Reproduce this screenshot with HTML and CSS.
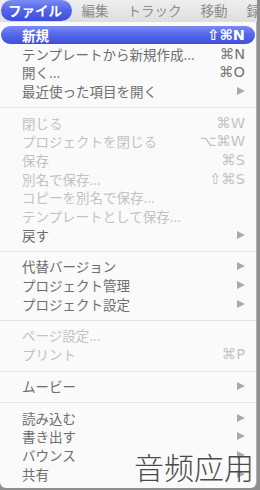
FILE: index.html
```html
<!DOCTYPE html>
<html lang="ja">
<head>
<meta charset="utf-8">
<link rel="stylesheet" href="styles.css">
</head>
<body>
<div class="screen">
  <div class="menubar">
    <span class="title active">ファイル</span>
    <span class="title">編集</span>
    <span class="title">トラック</span>
    <span class="title">移動</span>
    <span class="title cut">録</span>
  </div>
  <div class="menu">
    <div class="item hl"><span class="label">新規</span><span class="key">⇧⌘N</span></div>
    <div class="item"><span class="label">テンプレートから新規作成...</span><span class="key">⌘N</span></div>
    <div class="item"><span class="label">開く...</span><span class="key">⌘O</span></div>
    <div class="item"><span class="label">最近使った項目を開く</span><span class="arrow"></span></div>
    <div class="sep"></div>
    <div class="item off"><span class="label">閉じる</span><span class="key">⌘W</span></div>
    <div class="item off"><span class="label">プロジェクトを閉じる</span><span class="key">⌥⌘W</span></div>
    <div class="item off"><span class="label">保存</span><span class="key">⌘S</span></div>
    <div class="item off"><span class="label">別名で保存...</span><span class="key">⇧⌘S</span></div>
    <div class="item off"><span class="label">コピーを別名で保存...</span></div>
    <div class="item off"><span class="label">テンプレートとして保存...</span></div>
    <div class="item"><span class="label">戻す</span><span class="arrow"></span></div>
    <div class="sep"></div>
    <div class="item"><span class="label">代替バージョン</span><span class="arrow"></span></div>
    <div class="item"><span class="label">プロジェクト管理</span><span class="arrow"></span></div>
    <div class="item"><span class="label">プロジェクト設定</span><span class="arrow"></span></div>
    <div class="sep"></div>
    <div class="item off"><span class="label">ページ設定...</span></div>
    <div class="item off"><span class="label">プリント</span><span class="key">⌘P</span></div>
    <div class="sep"></div>
    <div class="item"><span class="label">ムービー</span><span class="arrow"></span></div>
    <div class="sep"></div>
    <div class="item"><span class="label">読み込む</span><span class="arrow"></span></div>
    <div class="item"><span class="label">書き出す</span><span class="arrow"></span></div>
    <div class="item"><span class="label">バウンス</span><span class="arrow"></span></div>
    <div class="item"><span class="label">共有</span><span class="arrow"></span></div>
  </div>
  <div class="watermark">音频应用</div>
</div>
</body>
</html>
```

FILE: styles.css
```css
html, body {
  margin: 0;
  padding: 0;
  background: #8e8e8e;
}

.screen {
  position: relative;
  width: 260px;
  height: 490px;
  overflow: hidden;
  background: #8e8e8e;
  font-family: "Noto Sans CJK JP", "Noto Sans CJK SC", sans-serif;
}

.menubar {
  width: 257px;
  height: 22px;
  display: flex;
  align-items: flex-start;
  padding-left: 1px;
  box-sizing: border-box;
  background: linear-gradient(#eeeeee, #dedede);
  font-size: 13.5px;
  color: #8c8c8c;
  overflow: hidden;
  white-space: nowrap;
}

.title {
  padding: 0 9.5px;
  height: 21px;
  line-height: 21px;
  flex: none;
}

.title.cut {
  padding-right: 0;
}

.title.active {
  padding: 0 10px 0 7px;
  color: #ffffff;
  font-weight: bold;
  border-radius: 11px;
  background: linear-gradient(#7b8cf6, #5566ea 45%, #3d4cdc);
}

.menu {
  width: 257px;
  height: 466px;
  padding-top: 3.5px;
  box-sizing: border-box;
  background: #fafafa;
  border-radius: 0 0 6px 6px;
  border-right: 1px solid #b0b0b0;
  font-size: 13.5px;
  color: #6e6e6e;
}

.item {
  height: 18.7px;
  margin: 0 1px;
  padding: 0 10px 0 21px;
  display: flex;
  align-items: center;
  white-space: nowrap;
}

.item.hl {
  color: #ffffff;
  font-weight: bold;
  border-radius: 9px;
  background: linear-gradient(#7a8bf6, #5668ea 45%, #3f4fde);
}

.item.off {
  color: #c2c2c2;
}

.label {
  line-height: 18px;
}

.key {
  margin-left: auto;
  font-family: "DejaVu Sans", sans-serif;
  font-size: 14.5px;
  line-height: 18px;
  color: #767676;
}

.item.off .key {
  color: #c2c2c2;
}

.item.hl .key {
  color: #ffffff;
  font-weight: bold;
}

.arrow {
  margin-left: auto;
  width: 0;
  height: 0;
  border-left: 8px solid #aaaaaa;
  border-top: 4.5px solid transparent;
  border-bottom: 4.5px solid transparent;
}

.sep {
  height: 13px;
  display: flex;
  align-items: center;
}

.sep::before {
  content: "";
  flex: 1;
  height: 1px;
  margin-top: 2px;
  background: #e3e3e3;
}

.watermark {
  position: absolute;
  left: 134px;
  top: 446px;
  font-family: "Noto Sans CJK SC", sans-serif;
  font-size: 30px;
  font-weight: 300;
  line-height: 40px;
  color: #4a4a4a;
}
```
